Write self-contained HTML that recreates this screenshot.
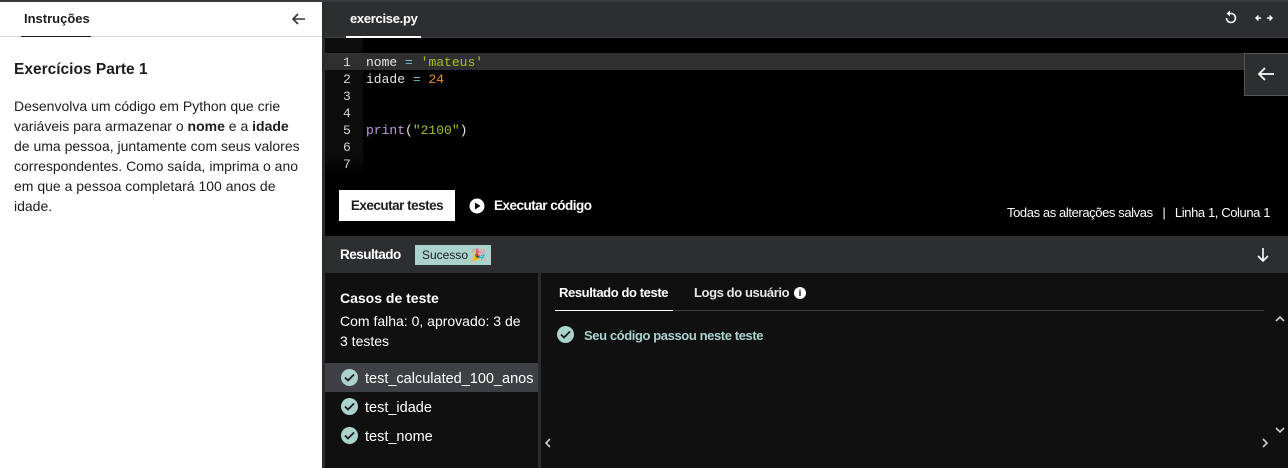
<!DOCTYPE html><html><head><meta charset="utf-8"><style>
*{margin:0;padding:0;box-sizing:border-box}
body{width:1288px;height:468px;overflow:hidden;background:#2b2c2e;font-family:"Liberation Sans",sans-serif;position:relative}
.abs{position:absolute}
.mono{font-family:"Liberation Mono",monospace;font-size:13px}
</style></head><body>
<div class="abs" style="left:0;top:0;width:1288px;height:2px;background:#3a3b3d"></div>
<!-- left panel -->
<div class="abs" style="left:0;top:2px;width:322px;height:466px;background:#fff"></div>
<div class="abs" style="left:322px;top:2px;width:3px;height:466px;background:#2b2c2e"></div>
<div class="abs" style="left:0;top:36px;width:322px;height:1px;background:#d6d6d9"></div>
<div class="abs" style="left:24px;top:11px;font-size:13px;color:#1c1d1f;font-weight:bold">Instruções</div>
<div class="abs" style="left:21px;top:36px;width:70px;height:1px;background:#1c1d1f"></div>
<svg class="abs" style="left:291px;top:12px" width="16" height="14" viewBox="0 0 16 14"><path d="M14 7H2M7 2L2 7l5 5" stroke="#333" stroke-width="1.6" fill="none"/></svg>
<div class="abs" style="left:14px;top:61px;font-size:15.5px;font-weight:bold;color:#1c1d1f">Exercícios Parte 1</div>
<div class="abs" style="left:14px;top:96px;width:292px;font-size:14px;line-height:20px;color:#1c1d1f">Desenvolva um código em Python que crie variáveis para armazenar o <b>nome</b> e a <b>idade</b> de uma pessoa, juntamente com seus valores correspondentes. Como saída, imprima o ano em que a pessoa completará 100 anos de idade.</div>
<!-- editor header -->
<div class="abs" style="left:325px;top:2px;width:963px;height:35px;background:#2d2e30"></div>
<div class="abs" style="left:325px;top:37px;width:963px;height:1px;background:#3e4043"></div>
<div class="abs" style="left:350px;top:11px;font-size:13px;color:#fff;font-weight:bold;letter-spacing:-0.3px">exercise.py</div>
<div class="abs" style="left:346px;top:36px;width:75px;height:2px;background:#fff"></div>
<svg class="abs" style="left:1223px;top:10px" width="16" height="16" viewBox="0 0 16 16"><path d="M3.5 8A4.5 4.5 0 1 0 8 3.5H6" stroke="#fff" stroke-width="1.6" fill="none"/><path d="M7 0.5v6L3.5 3.5z" fill="#fff"/></svg>
<svg class="abs" style="left:1255px;top:12px" width="18" height="12" viewBox="0 0 18 12"><path d="M1 6h5M12 6h5M3.5 3.5L1 6l2.5 2.5M14.5 3.5L17 6l-2.5 2.5" stroke="#fff" stroke-width="1.4" fill="none"/></svg>
<!-- code -->
<div class="abs" style="left:325px;top:38px;width:963px;height:198px;background:#000"></div>
<div class="abs" style="left:325px;top:38px;width:38px;height:138px;background:linear-gradient(#0c0c0c 85%,#000)"></div>
<div class="abs" style="left:325px;top:53px;width:963px;height:17px;background:#2f2f30"></div>
<div class="abs mono" style="left:343px;top:54px;line-height:17px;color:#d4d4d4">1<br>2<br>3<br>4<br>5<br>6<br>7</div>
<div class="abs mono" style="left:366px;top:54px;line-height:17px;color:#e6e6e6;white-space:pre">nome <span style="color:#6fc6c0">=</span> <span style="color:#a8c023">'mateus'</span>
idade <span style="color:#6fc6c0">=</span> <span style="color:#f28b30">24</span>


<span style="color:#c798e0">print</span>(<span style="color:#a8c023">"2100"</span>)</div>
<div class="abs" style="left:1244px;top:53px;width:44px;height:43px;background:#2d2e30;border:1px solid #55575a;border-right:none"></div>
<svg class="abs" style="left:1257px;top:66px" width="18" height="16" viewBox="0 0 18 16"><path d="M17 8H2M8 2L2 8l6 6" stroke="#fff" stroke-width="1.8" fill="none"/></svg>
<div class="abs" style="left:339px;top:190px;width:116px;height:31px;background:#fff;color:#1c1d1f;font-size:13.5px;font-weight:bold;line-height:31px;text-align:center;letter-spacing:-0.5px">Executar testes</div>
<svg class="abs" style="left:469px;top:198px" width="16" height="16" viewBox="0 0 16 16"><circle cx="8" cy="8" r="7.5" fill="#fff"/><path d="M6 4.5v7l5.5-3.5z" fill="#000"/></svg>
<div class="abs" style="left:494px;top:198px;color:#fff;font-size:13.5px;font-weight:bold;letter-spacing:-0.5px">Executar código</div>
<div class="abs" style="left:1007px;top:205px;color:#fff;font-size:13px;letter-spacing:-0.4px;white-space:pre">Todas as alterações salvas   |   Linha 1, Coluna 1</div>
<!-- resultado bar -->
<div class="abs" style="left:325px;top:236px;width:963px;height:36px;background:#2d2e30"></div>
<div class="abs" style="left:340px;top:247px;color:#fff;font-size:13.5px;font-weight:bold;letter-spacing:-0.5px">Resultado</div>
<div class="abs" style="left:415px;top:245px;width:76px;height:20px;background:#acd2cc;color:#1c1d1f;font-size:12px;line-height:20px;padding-left:7px">Sucesso 🎉</div>
<svg class="abs" style="left:1256px;top:247px" width="14" height="16" viewBox="0 0 14 16"><path d="M7 1v13M2 9l5 5 5-5" stroke="#fff" stroke-width="1.6" fill="none"/></svg>
<!-- bottom -->
<div class="abs" style="left:325px;top:273px;width:213px;height:195px;background:#101011"></div>
<div class="abs" style="left:541px;top:273px;width:747px;height:195px;background:#101011"></div>
<div class="abs" style="left:340px;top:290px;color:#fff;font-size:14px;font-weight:bold">Casos de teste</div>
<div class="abs" style="left:340px;top:311px;width:186px;color:#fff;font-size:14px;line-height:20px">Com falha: 0, aprovado: 3 de 3 testes</div>
<div class="abs" style="left:325px;top:363px;width:213px;height:29px;background:#3e4043"></div>
<div class="abs" style="left:341px;top:369px;width:192px;overflow:hidden;white-space:nowrap;color:#fff;font-size:14.5px;line-height:18px">
<div style="height:29px"><span style="display:inline-block;width:17px;height:17px;border-radius:50%;background:#acd2cc;vertical-align:-3px;margin-right:7px;position:relative"><svg style="position:absolute;left:3px;top:4px" width="11" height="9"><path d="M1 4.5l3 3 6-6" stroke="#1c1d1f" stroke-width="1.8" fill="none"/></svg></span>test_calculated_100_anos</div>
<div style="height:29px"><span style="display:inline-block;width:17px;height:17px;border-radius:50%;background:#acd2cc;vertical-align:-3px;margin-right:7px;position:relative"><svg style="position:absolute;left:3px;top:4px" width="11" height="9"><path d="M1 4.5l3 3 6-6" stroke="#1c1d1f" stroke-width="1.8" fill="none"/></svg></span>test_idade</div>
<div style="height:29px"><span style="display:inline-block;width:17px;height:17px;border-radius:50%;background:#acd2cc;vertical-align:-3px;margin-right:7px;position:relative"><svg style="position:absolute;left:3px;top:4px" width="11" height="9"><path d="M1 4.5l3 3 6-6" stroke="#1c1d1f" stroke-width="1.8" fill="none"/></svg></span>test_nome</div>
</div>
<div class="abs" style="left:559px;top:285px;color:#fff;font-size:13px;font-weight:bold;letter-spacing:-0.4px">Resultado do teste</div>
<div class="abs" style="left:555px;top:310px;width:118px;height:1px;background:#fff"></div>
<div class="abs" style="left:673px;top:310px;width:591px;height:1px;background:#3e4043"></div>
<div class="abs" style="left:694px;top:285px;color:#e6e6e6;font-size:13px;font-weight:bold;letter-spacing:-0.4px">Logs do usuário</div>
<div class="abs" style="left:794px;top:287px;width:12px;height:12px;border-radius:50%;background:#fff;color:#000;font-size:9px;font-weight:bold;text-align:center;line-height:12px">i</div>
<span class="abs" style="left:557px;top:326px;width:17px;height:17px;border-radius:50%;background:#acd2cc"><svg style="position:absolute;left:3px;top:4px" width="11" height="9"><path d="M1 4.5l3 3 6-6" stroke="#1c1d1f" stroke-width="1.8" fill="none"/></svg></span>
<div class="abs" style="left:584px;top:328px;color:#acd2cc;font-size:13px;font-weight:bold;letter-spacing:-0.4px">Seu código passou neste teste</div>
<svg class="abs" style="left:544px;top:438px" width="8" height="10"><path d="M6 1L2 5l4 4" stroke="#ccc" stroke-width="1.6" fill="none"/></svg>
<svg class="abs" style="left:1261px;top:438px" width="8" height="10"><path d="M2 1l4 4-4 4" stroke="#ccc" stroke-width="1.6" fill="none"/></svg>
<svg class="abs" style="left:1275px;top:315px" width="10" height="8"><path d="M1 6l4-4 4 4" stroke="#ccc" stroke-width="1.6" fill="none"/></svg>
<svg class="abs" style="left:1275px;top:426px" width="10" height="8"><path d="M1 2l4 4 4-4" stroke="#ccc" stroke-width="1.6" fill="none"/></svg>
</body></html>
